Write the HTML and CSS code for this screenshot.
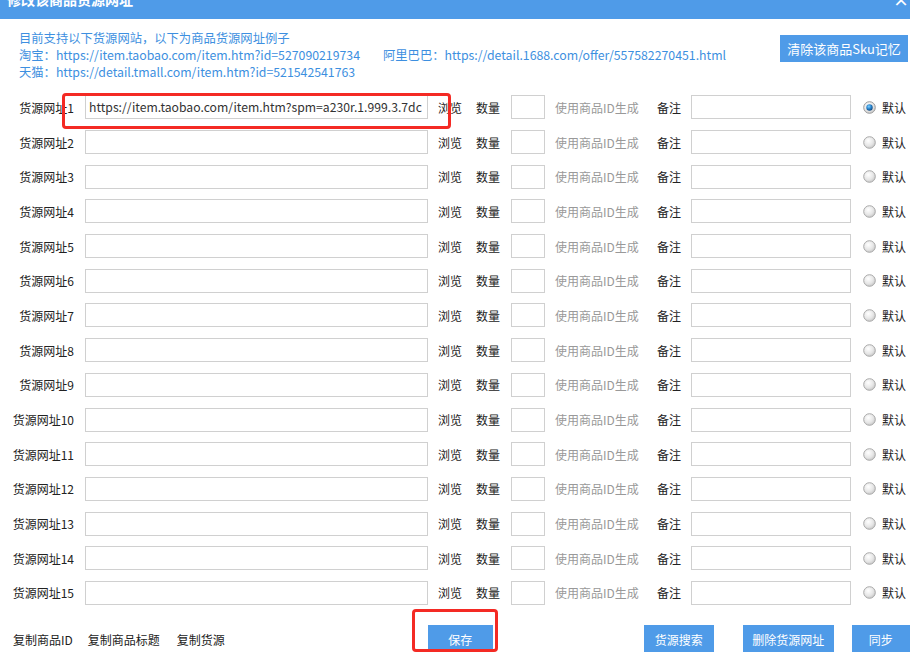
FILE: index.html
```html
<!DOCTYPE html>
<html lang="zh-CN">
<head>
<meta charset="utf-8">
<title>修改该商品货源网址</title>
<link rel="stylesheet" href="styles.css">
</head>
<body>
<div class="dialog">
  <div class="titlebar">
    <span class="title">修改该商品货源网址</span>
    <span class="close">×</span>
  </div>

  <div class="info">
    <div class="info-text">
      <div class="line">目前支持以下货源网站，以下为商品货源网址例子</div>
      <div class="line"><span class="ex-tb">淘宝：https://item.taobao.com/item.htm?id=527090219734</span><span>阿里巴巴：https://detail.1688.com/offer/557582270451.html</span></div>
      <div class="line">天猫：https://detail.tmall.com/item.htm?id=521542541763</div>
    </div>
    <button class="btn btn-clear">清除该商品Sku记忆</button>
  </div>

  <div class="rows">
    <div class="row"><span class="lbl">货源网址1</span><input class="url" type="text" value="https://item.taobao.com/item.htm?spm=a230r.1.999.3.7dc"><span class="browse">浏览</span><span class="qty-lbl">数量</span><input class="qty" type="text"><span class="gen">使用商品ID生成</span><span class="note-lbl">备注</span><input class="note" type="text"><span class="radio checked"><svg viewBox="0 0 13 13" width="13" height="13"><circle cx="6.5" cy="6.5" r="5.8" fill="url(#rg)" stroke="#9a9a9a" stroke-width="1"/><circle cx="6.5" cy="6.5" r="3.2" fill="url(#dot)"/></svg></span><span class="def">默认</span></div>
    <div class="row"><span class="lbl">货源网址2</span><input class="url" type="text"><span class="browse">浏览</span><span class="qty-lbl">数量</span><input class="qty" type="text"><span class="gen">使用商品ID生成</span><span class="note-lbl">备注</span><input class="note" type="text"><span class="radio"><svg viewBox="0 0 13 13" width="13" height="13"><circle cx="6.5" cy="6.5" r="5.8" fill="url(#rg)" stroke="#a8a8a8" stroke-width="1"/></svg></span><span class="def">默认</span></div>
    <div class="row"><span class="lbl">货源网址3</span><input class="url" type="text"><span class="browse">浏览</span><span class="qty-lbl">数量</span><input class="qty" type="text"><span class="gen">使用商品ID生成</span><span class="note-lbl">备注</span><input class="note" type="text"><span class="radio"><svg viewBox="0 0 13 13" width="13" height="13"><circle cx="6.5" cy="6.5" r="5.8" fill="url(#rg)" stroke="#a8a8a8" stroke-width="1"/></svg></span><span class="def">默认</span></div>
    <div class="row"><span class="lbl">货源网址4</span><input class="url" type="text"><span class="browse">浏览</span><span class="qty-lbl">数量</span><input class="qty" type="text"><span class="gen">使用商品ID生成</span><span class="note-lbl">备注</span><input class="note" type="text"><span class="radio"><svg viewBox="0 0 13 13" width="13" height="13"><circle cx="6.5" cy="6.5" r="5.8" fill="url(#rg)" stroke="#a8a8a8" stroke-width="1"/></svg></span><span class="def">默认</span></div>
    <div class="row"><span class="lbl">货源网址5</span><input class="url" type="text"><span class="browse">浏览</span><span class="qty-lbl">数量</span><input class="qty" type="text"><span class="gen">使用商品ID生成</span><span class="note-lbl">备注</span><input class="note" type="text"><span class="radio"><svg viewBox="0 0 13 13" width="13" height="13"><circle cx="6.5" cy="6.5" r="5.8" fill="url(#rg)" stroke="#a8a8a8" stroke-width="1"/></svg></span><span class="def">默认</span></div>
    <div class="row"><span class="lbl">货源网址6</span><input class="url" type="text"><span class="browse">浏览</span><span class="qty-lbl">数量</span><input class="qty" type="text"><span class="gen">使用商品ID生成</span><span class="note-lbl">备注</span><input class="note" type="text"><span class="radio"><svg viewBox="0 0 13 13" width="13" height="13"><circle cx="6.5" cy="6.5" r="5.8" fill="url(#rg)" stroke="#a8a8a8" stroke-width="1"/></svg></span><span class="def">默认</span></div>
    <div class="row"><span class="lbl">货源网址7</span><input class="url" type="text"><span class="browse">浏览</span><span class="qty-lbl">数量</span><input class="qty" type="text"><span class="gen">使用商品ID生成</span><span class="note-lbl">备注</span><input class="note" type="text"><span class="radio"><svg viewBox="0 0 13 13" width="13" height="13"><circle cx="6.5" cy="6.5" r="5.8" fill="url(#rg)" stroke="#a8a8a8" stroke-width="1"/></svg></span><span class="def">默认</span></div>
    <div class="row"><span class="lbl">货源网址8</span><input class="url" type="text"><span class="browse">浏览</span><span class="qty-lbl">数量</span><input class="qty" type="text"><span class="gen">使用商品ID生成</span><span class="note-lbl">备注</span><input class="note" type="text"><span class="radio"><svg viewBox="0 0 13 13" width="13" height="13"><circle cx="6.5" cy="6.5" r="5.8" fill="url(#rg)" stroke="#a8a8a8" stroke-width="1"/></svg></span><span class="def">默认</span></div>
    <div class="row"><span class="lbl">货源网址9</span><input class="url" type="text"><span class="browse">浏览</span><span class="qty-lbl">数量</span><input class="qty" type="text"><span class="gen">使用商品ID生成</span><span class="note-lbl">备注</span><input class="note" type="text"><span class="radio"><svg viewBox="0 0 13 13" width="13" height="13"><circle cx="6.5" cy="6.5" r="5.8" fill="url(#rg)" stroke="#a8a8a8" stroke-width="1"/></svg></span><span class="def">默认</span></div>
    <div class="row"><span class="lbl">货源网址10</span><input class="url" type="text"><span class="browse">浏览</span><span class="qty-lbl">数量</span><input class="qty" type="text"><span class="gen">使用商品ID生成</span><span class="note-lbl">备注</span><input class="note" type="text"><span class="radio"><svg viewBox="0 0 13 13" width="13" height="13"><circle cx="6.5" cy="6.5" r="5.8" fill="url(#rg)" stroke="#a8a8a8" stroke-width="1"/></svg></span><span class="def">默认</span></div>
    <div class="row"><span class="lbl">货源网址11</span><input class="url" type="text"><span class="browse">浏览</span><span class="qty-lbl">数量</span><input class="qty" type="text"><span class="gen">使用商品ID生成</span><span class="note-lbl">备注</span><input class="note" type="text"><span class="radio"><svg viewBox="0 0 13 13" width="13" height="13"><circle cx="6.5" cy="6.5" r="5.8" fill="url(#rg)" stroke="#a8a8a8" stroke-width="1"/></svg></span><span class="def">默认</span></div>
    <div class="row"><span class="lbl">货源网址12</span><input class="url" type="text"><span class="browse">浏览</span><span class="qty-lbl">数量</span><input class="qty" type="text"><span class="gen">使用商品ID生成</span><span class="note-lbl">备注</span><input class="note" type="text"><span class="radio"><svg viewBox="0 0 13 13" width="13" height="13"><circle cx="6.5" cy="6.5" r="5.8" fill="url(#rg)" stroke="#a8a8a8" stroke-width="1"/></svg></span><span class="def">默认</span></div>
    <div class="row"><span class="lbl">货源网址13</span><input class="url" type="text"><span class="browse">浏览</span><span class="qty-lbl">数量</span><input class="qty" type="text"><span class="gen">使用商品ID生成</span><span class="note-lbl">备注</span><input class="note" type="text"><span class="radio"><svg viewBox="0 0 13 13" width="13" height="13"><circle cx="6.5" cy="6.5" r="5.8" fill="url(#rg)" stroke="#a8a8a8" stroke-width="1"/></svg></span><span class="def">默认</span></div>
    <div class="row"><span class="lbl">货源网址14</span><input class="url" type="text"><span class="browse">浏览</span><span class="qty-lbl">数量</span><input class="qty" type="text"><span class="gen">使用商品ID生成</span><span class="note-lbl">备注</span><input class="note" type="text"><span class="radio"><svg viewBox="0 0 13 13" width="13" height="13"><circle cx="6.5" cy="6.5" r="5.8" fill="url(#rg)" stroke="#a8a8a8" stroke-width="1"/></svg></span><span class="def">默认</span></div>
    <div class="row"><span class="lbl">货源网址15</span><input class="url" type="text"><span class="browse">浏览</span><span class="qty-lbl">数量</span><input class="qty" type="text"><span class="gen">使用商品ID生成</span><span class="note-lbl">备注</span><input class="note" type="text"><span class="radio"><svg viewBox="0 0 13 13" width="13" height="13"><circle cx="6.5" cy="6.5" r="5.8" fill="url(#rg)" stroke="#a8a8a8" stroke-width="1"/></svg></span><span class="def">默认</span></div>
  </div>

  <div class="footer">
    <span class="copy copy-id">复制商品ID</span>
    <span class="copy copy-title">复制商品标题</span>
    <span class="copy copy-src">复制货源</span>
    <button class="btn btn-save">保存</button>
    <button class="btn btn-search">货源搜索</button>
    <button class="btn btn-del">删除货源网址</button>
    <button class="btn btn-sync">同步</button>
  </div>

  <div class="mark mark-url"></div>
  <div class="mark mark-save"></div>

  <svg class="defs" width="0" height="0">
    <defs>
      <radialGradient id="rg" cx="0.4" cy="0.35" r="0.7">
        <stop offset="0" stop-color="#ffffff"/>
        <stop offset="0.6" stop-color="#e6e6e6"/>
        <stop offset="1" stop-color="#c4c4c4"/>
      </radialGradient>
      <radialGradient id="dot" cx="0.4" cy="0.35" r="0.7">
        <stop offset="0" stop-color="#7fd0ff"/>
        <stop offset="0.5" stop-color="#2a86cf"/>
        <stop offset="1" stop-color="#0d3f73"/>
      </radialGradient>
    </defs>
  </svg>
</div>
</body>
</html>
```

FILE: styles.css
```css
* { box-sizing: border-box; }

html, body {
  margin: 0;
  padding: 0;
  background: #ffffff;
}

body {
  font-family: "Noto Sans CJK SC", "Noto Sans", sans-serif;
  font-size: 12px;
  color: #222222;
}

.dialog {
  position: relative;
  width: 910px;
  height: 652px;
  overflow: hidden;
}

.titlebar {
  height: 19px;
  background: #4f9be8;
  color: #ffffff;
  display: flex;
  justify-content: space-between;
  overflow: hidden;
}

.title {
  font-size: 14px;
  line-height: 14px;
  margin-top: -8px;
  margin-left: 7px;
  font-weight: bold;
}

.close {
  font-size: 16px;
  line-height: 16px;
  margin-top: -9px;
  margin-right: 1px;
  font-weight: bold;
}

.info {
  display: flex;
  justify-content: space-between;
  align-items: flex-start;
  padding: 11px 2px 0 19px;
  height: 71px;
}

.info-text {
  color: #3d8fe0;
  font-size: 12.3px;
  line-height: 17px;
}

.ex-tb {
  display: inline-block;
  width: 364px;
}

.btn {
  border: 0;
  background: #4f9be8;
  color: #ffffff;
  font-family: inherit;
  font-size: 12px;
  padding: 0;
  height: 28px;
  cursor: pointer;
}

.btn-clear {
  width: 128px;
  height: 27px;
  margin-top: 5px;
  font-size: 13px;
}

.rows {
  display: grid;
  grid-auto-rows: 34.7px;
}

.row {
  display: flex;
  align-items: center;
}

.lbl {
  width: 74px;
  text-align: right;
  white-space: nowrap;
}

input {
  height: 24px;
  border: 1px solid #d0d0d0;
  background: #ffffff;
  font-family: inherit;
  font-size: 12.2px;
  color: #333333;
  padding: 0 2px 0 3px;
  outline: none;
}

.url {
  width: 343px;
  margin-left: 11px;
}

.browse {
  margin-left: 10px;
  width: 24px;
}

.qty-lbl {
  margin-left: 14px;
  width: 24px;
}

.qty {
  width: 34px;
  margin-left: 11px;
}

.gen {
  margin-left: 10px;
  width: 86px;
  color: #999999;
  white-space: nowrap;
}

.note-lbl {
  margin-left: 16px;
  width: 24px;
}

.note {
  width: 160px;
  margin-left: 10px;
}

.radio {
  margin-left: 12px;
  width: 13px;
  height: 13px;
  display: flex;
}

.def {
  margin-left: 6px;
  white-space: nowrap;
}

.footer {
  display: flex;
  align-items: center;
  margin-top: 15px;
  height: 28px;
}

.copy {
  white-space: nowrap;
}

.copy-id { margin-left: 13px; }
.copy-title { margin-left: 15px; }
.copy-src { margin-left: 17px; }

.btn-save {
  width: 65px;
  margin-left: 203px;
}

.btn-search {
  width: 70px;
  margin-left: 151px;
}

.btn-del {
  width: 91px;
  margin-left: 29px;
}

.btn-sync {
  width: 58px;
  margin-left: 18px;
}

.mark {
  position: absolute;
  border: 3px solid #f42a24;
  border-radius: 4px;
  pointer-events: none;
}

.mark-url {
  left: 62px;
  top: 93px;
  width: 389px;
  height: 36px;
}

.mark-save {
  left: 412px;
  top: 609px;
  width: 86px;
  height: 43px;
}

.defs {
  position: absolute;
  width: 0;
  height: 0;
}
```
